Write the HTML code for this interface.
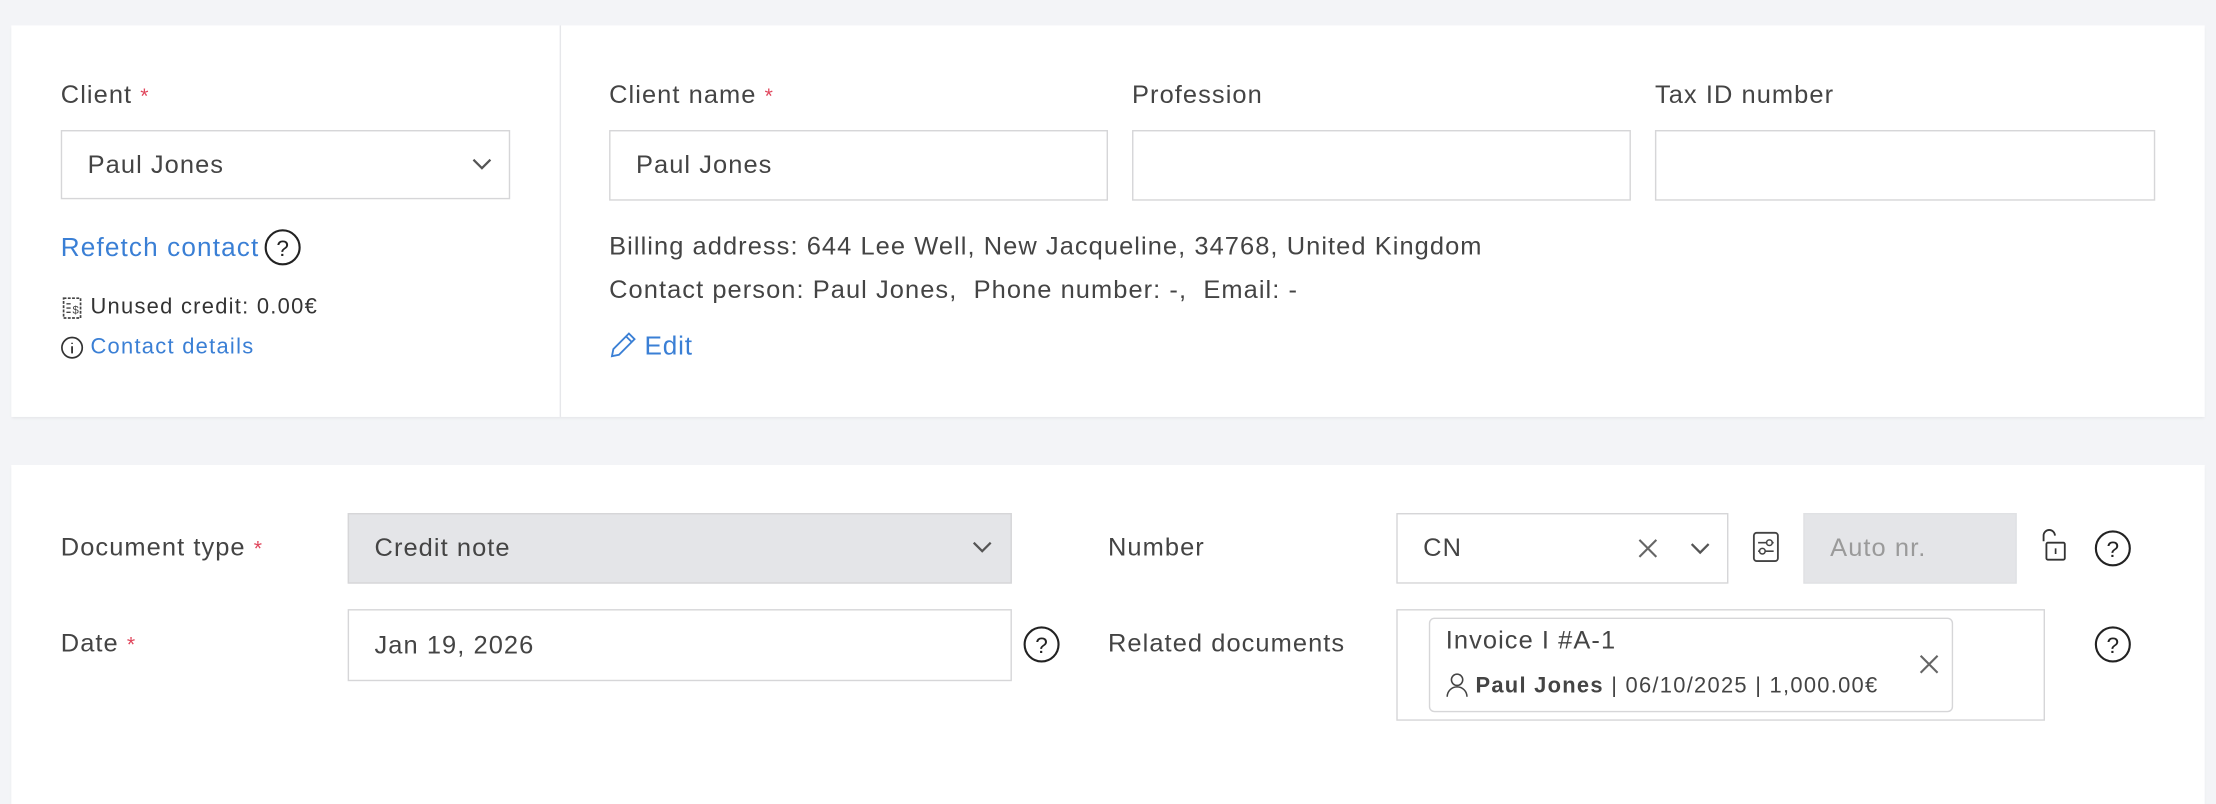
<!DOCTYPE html>
<html><head><meta charset="utf-8"><style>
html,body{margin:0;padding:0;background:#f3f4f7;width:2216px;height:792px;overflow:hidden}
#w{position:absolute;left:0;top:0;width:1568px;height:560px;transform:scale(1.41327);transform-origin:0 0;font-family:"Liberation Sans",sans-serif;color:#444}
.a{position:absolute;white-space:nowrap}
.card{position:absolute;background:#fff;box-shadow:0 1px 2px rgba(0,0,0,.06)}
.lbl{font-size:18px;letter-spacing:.75px;color:#444}
.req{color:#e0475d;font-size:15px}
.inp{position:absolute;border:1px solid #d6d6d8;background:#fff;box-sizing:border-box}
.inp span{position:absolute;left:18px;top:50%;transform:translateY(-50%);font-size:18px;letter-spacing:.75px;color:#444}
.blue{color:#3a7fd5}
.sm{font-size:15.5px;letter-spacing:.9px}
svg{position:absolute;overflow:visible}
</style></head><body><div id="w">
<div class="card" style="left:8px;top:18px;width:1552px;height:277px"></div>
<div class="a" style="left:396px;top:18px;width:1px;height:277px;background:#e6e7ea"></div>
<div class="card" style="left:8px;top:329px;width:1552px;height:240px"></div>

<div class="a lbl" style="left:43px;top:57px">Client <span class="req">*</span></div>
<div class="inp" style="left:43px;top:92px;width:318px;height:49px"><span>Paul Jones</span></div>
<svg style="left:334px;top:112px" width="14" height="9"><path d="M1 1L7 7L13 1" fill="none" stroke="#555" stroke-width="1.6"/></svg>
<div class="a blue" style="left:43px;top:164px;font-size:18.5px;letter-spacing:.8px">Refetch contact</div>
<svg style="left:187px;top:162px" width="26" height="26"><circle cx="13" cy="13" r="12" fill="none" stroke="#222" stroke-width="1.5"/><text x="13" y="19" text-anchor="middle" font-size="16" font-family="Liberation Sans" fill="#222">?</text></svg>
<svg style="left:44px;top:210px" width="14" height="16"><rect x="1" y="1" width="12" height="14" fill="none" stroke="#444" stroke-width="1.2" stroke-dasharray="2 1"/><path d="M3 5h3M3 8h3M3 11h3" stroke="#444" stroke-width="1"/><text x="9.5" y="12" text-anchor="middle" font-size="8" fill="#444">$</text></svg>
<div class="a sm" style="left:64px;top:209px;color:#333">Unused credit: 0.00€</div>
<svg style="left:43px;top:238px" width="16" height="16"><circle cx="8" cy="8" r="7.2" fill="none" stroke="#333" stroke-width="1.2"/><path d="M8 7v5M8 4.5v.8" stroke="#333" stroke-width="1.3"/></svg>
<div class="a blue sm" style="left:64px;top:237px">Contact details</div>

<div class="a lbl" style="left:431px;top:57px">Client name <span class="req">*</span></div>
<div class="a lbl" style="left:801px;top:57px">Profession</div>
<div class="a lbl" style="left:1171px;top:57px">Tax ID number</div>
<div class="inp" style="left:431px;top:92px;width:353px;height:50px"><span>Paul Jones</span></div>
<div class="inp" style="left:801px;top:92px;width:353px;height:50px"></div>
<div class="inp" style="left:1171px;top:92px;width:354px;height:50px"></div>
<div class="a lbl" style="left:431px;top:164px">Billing address: 644 Lee Well, New Jacqueline, 34768, United Kingdom</div>
<div class="a lbl" style="left:431px;top:195px">Contact person: Paul Jones,&nbsp; Phone number: -,&nbsp; Email: -</div>
<svg style="left:431px;top:234px" width="20" height="20"><path d="M2 18l1-5L14 2l4 4L7 17z M12 4l4 4" fill="none" stroke="#3a7fd5" stroke-width="1.3"/></svg>
<div class="a blue" style="left:456px;top:234px;font-size:18.5px;letter-spacing:.6px">Edit</div>

<div class="a lbl" style="left:43px;top:377px">Document type <span class="req">*</span></div>
<div class="inp" style="left:246px;top:363px;width:470px;height:50px;background:#e4e5e8"><span>Credit note</span></div>
<svg style="left:688px;top:383px" width="14" height="9"><path d="M1 1L7 7L13 1" fill="none" stroke="#555" stroke-width="1.6"/></svg>
<div class="a lbl" style="left:43px;top:445px">Date <span class="req">*</span></div>
<div class="inp" style="left:246px;top:431px;width:470px;height:51px"><span>Jan 19, 2026</span></div>
<svg style="left:724px;top:443px" width="26" height="26"><circle cx="13" cy="13" r="12" fill="none" stroke="#222" stroke-width="1.5"/><text x="13" y="19" text-anchor="middle" font-size="16" font-family="Liberation Sans" fill="#222">?</text></svg>

<div class="a lbl" style="left:784px;top:377px">Number</div>
<div class="inp" style="left:988px;top:363px;width:235px;height:50px"><span>CN</span></div>
<svg style="left:1159px;top:381px" width="14" height="14"><path d="M1 1L13 13M13 1L1 13" stroke="#666" stroke-width="1.5"/></svg>
<svg style="left:1196px;top:384px" width="14" height="9"><path d="M1 1L7 7L13 1" fill="none" stroke="#555" stroke-width="1.6"/></svg>
<svg style="left:1240px;top:376px" width="19" height="22"><rect x="1" y="1" width="17" height="20" rx="2" fill="none" stroke="#444" stroke-width="1.3"/><path d="M4 8h11M4 14h11" stroke="#444" stroke-width="1.1"/><circle cx="12" cy="8" r="2" fill="#fff" stroke="#444" stroke-width="1.1"/><circle cx="7" cy="14" r="2" fill="#fff" stroke="#444" stroke-width="1.1"/></svg>
<div class="inp" style="left:1276px;top:363px;width:151px;height:50px;background:#e4e5e8;border-color:#e0e1e4"><span style="color:#9a9a9a">Auto nr.</span></div>
<svg style="left:1443px;top:374px" width="20" height="24"><path d="M3 9V5a4 4 0 0 1 8 0" fill="none" stroke="#333" stroke-width="1.3"/><rect x="5" y="10" width="13" height="12" rx="1" fill="none" stroke="#333" stroke-width="1.3"/><path d="M11.5 14v4" stroke="#333" stroke-width="1.2"/></svg>
<svg style="left:1482px;top:375px" width="26" height="26"><circle cx="13" cy="13" r="12" fill="none" stroke="#222" stroke-width="1.5"/><text x="13" y="19" text-anchor="middle" font-size="16" font-family="Liberation Sans" fill="#222">?</text></svg>

<div class="a lbl" style="left:784px;top:445px">Related documents</div>
<div class="inp" style="left:988px;top:431px;width:459px;height:79px"></div>
<div class="inp" style="left:1011px;top:437px;width:371px;height:67px;border-radius:4px"></div>
<div class="a lbl" style="left:1023px;top:443px">Invoice I #A-1</div>
<svg style="left:1023px;top:476px" width="16" height="18"><circle cx="8" cy="5" r="4" fill="none" stroke="#444" stroke-width="1.1"/><path d="M1 17a7 7 0 0 1 14 0" fill="none" stroke="#444" stroke-width="1.1"/></svg>
<div class="a sm" style="left:1044px;top:477px;color:#444"><b>Paul Jones</b> | 06/10/2025 | 1,000.00€</div>
<svg style="left:1358px;top:463px" width="14" height="14"><path d="M1 1L13 13M13 1L1 13" stroke="#666" stroke-width="1.5"/></svg>
<svg style="left:1482px;top:443px" width="26" height="26"><circle cx="13" cy="13" r="12" fill="none" stroke="#222" stroke-width="1.5"/><text x="13" y="19" text-anchor="middle" font-size="16" font-family="Liberation Sans" fill="#222">?</text></svg>
</div></body></html>
